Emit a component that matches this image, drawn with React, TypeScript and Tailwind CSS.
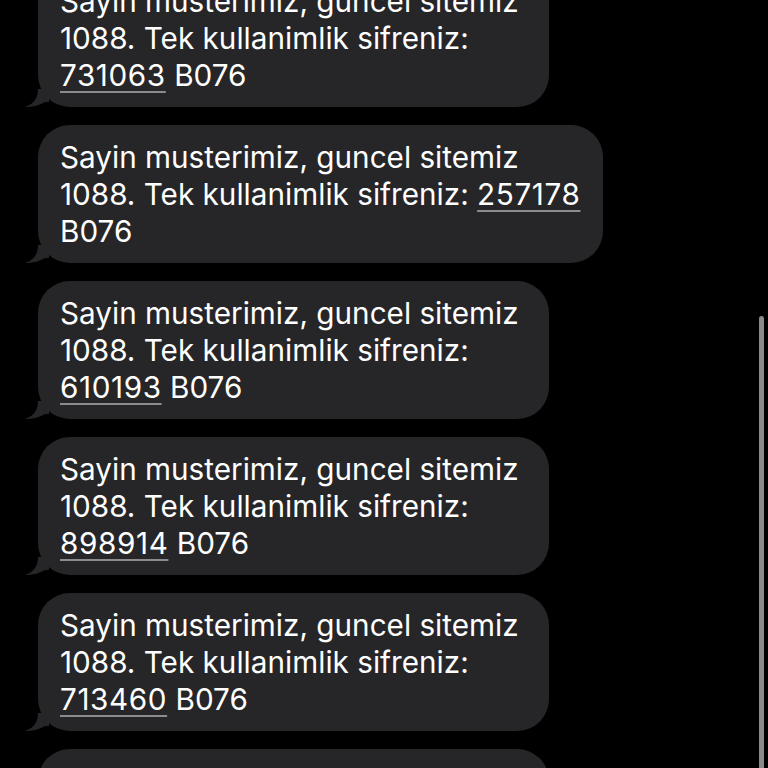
import type { ReactNode } from "react";

const messages = [
  { code: "731063", codeOnSecondLine: false },
  { code: "257178", codeOnSecondLine: true },
  { code: "610193", codeOnSecondLine: false },
  { code: "898914", codeOnSecondLine: false },
  { code: "713460", codeOnSecondLine: false },
  { code: "", codeOnSecondLine: false },
];

function Code({ children }: { children: ReactNode }) {
  return (
    <span className="tracking-[0.6px] underline decoration-[#8c8c8e] decoration-2 underline-offset-[5px]">
      {children}
    </span>
  );
}

function Tail() {
  return (
    <svg
      className="absolute -left-[13px] bottom-0"
      width="24"
      height="18"
      viewBox="0 0 24 18"
      aria-hidden
    >
      <path d="M13 0 C13 9 9 15 0 18 C8 18 15 16 20 13 L24 13 L24 0 Z" fill="#262628" />
    </svg>
  );
}

function Bubble({ code, codeOnSecondLine }: { code: string; codeOnSecondLine: boolean }) {
  return (
    <div
      className={
        codeOnSecondLine
          ? "relative w-[565px] rounded-[32px] bg-[#262628] px-[22px] py-[13.5px] text-[29.7px] leading-[37px] text-white"
          : "relative w-[511px] rounded-[32px] bg-[#262628] px-[22px] py-[13.5px] text-[29.7px] leading-[37px] text-white"
      }
    >
      <Tail />
      <div className="whitespace-nowrap">Sayin musterimiz, guncel sitemiz</div>
      {codeOnSecondLine ? (
        <>
          <div className="whitespace-nowrap">
            1088. Tek kullanimlik sifreniz: <Code>{code}</Code>
          </div>
          <div className="whitespace-nowrap">B076</div>
        </>
      ) : (
        <>
          <div className="whitespace-nowrap">1088. Tek kullanimlik sifreniz:</div>
          <div className="whitespace-nowrap">
            <Code>{code}</Code> B076
          </div>
        </>
      )}
    </div>
  );
}

export default function App() {
  return (
    <div
      className="relative h-[768px] w-[768px] overflow-hidden bg-black"
      style={{ fontFamily: "Inter, 'Noto Sans', sans-serif" }}
    >
      <div className="-mt-[31px] flex flex-col gap-[18px] pl-[38px]">
        {messages.map((m, i) => (
          <Bubble key={i} code={m.code} codeOnSecondLine={m.codeOnSecondLine} />
        ))}
      </div>
      <div className="absolute right-[4px] top-[316px] h-[480px] w-[5px] rounded-full bg-[#8a8a8a]" />
    </div>
  );
}
